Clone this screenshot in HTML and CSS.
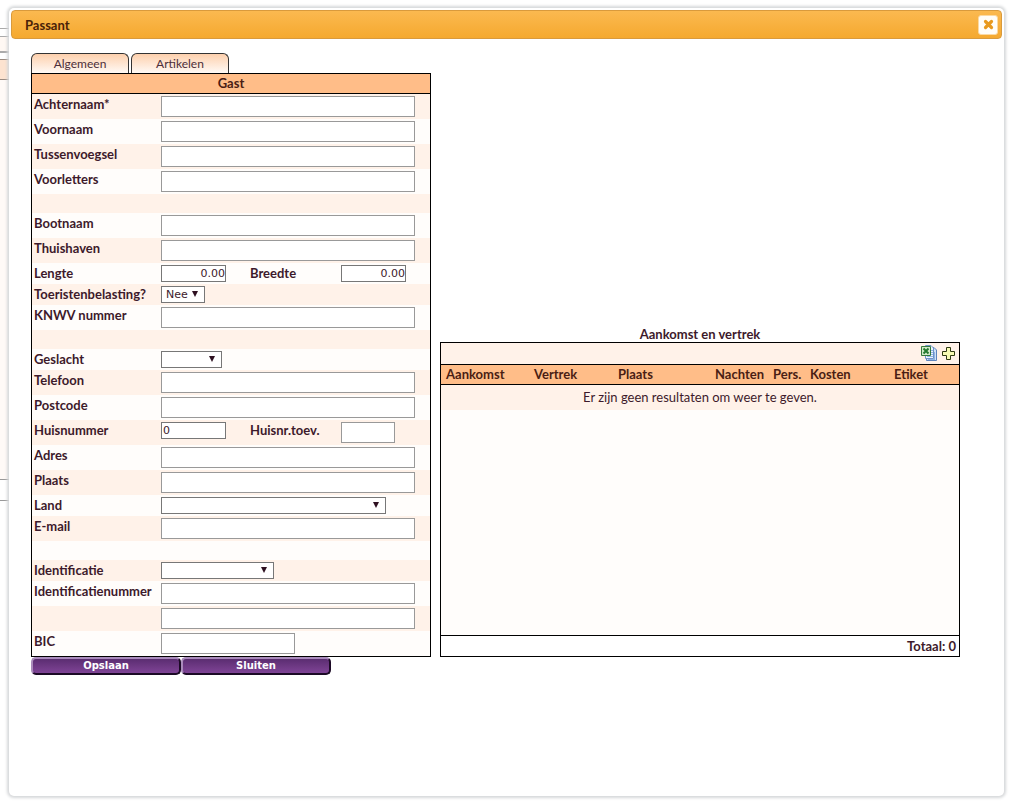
FILE: index.html
```html
<!DOCTYPE html>
<html lang="nl">
<head>
<meta charset="utf-8">
<title>Passant</title>
<link rel="stylesheet" href="styles.css">
</head>
<body>
<div class="backdrop" aria-hidden="true">
  <div class="bd-top"></div>
  <div class="bd-bar"></div>
  <div class="bd-gap"></div>
  <div class="bd-head"></div>
  <div class="bd-body"></div>
  <div class="bd-foot"></div>
</div>
<section class="dialog" role="dialog" aria-labelledby="title">
  <header class="titlebar">
    <h1 class="title" id="title">Passant</h1>
    <button class="close" type="button" aria-label="Venster sluiten">
      <svg width="11" height="11" viewBox="0 0 11 11"><path d="M2.5 2.5 8.5 8.5M8.500 2.500 2.500 8.500" stroke="#e8991d" stroke-width="3.200" stroke-linecap="round"/></svg>
    </button>
  </header>
  <form class="content">
    <nav class="tabs">
      <a class="tab" href="#algemeen">Algemeen</a>
      <a class="tab" href="#artikelen">Artikelen</a>
    </nav>
    <div class="panels">
      <div class="guest" id="algemeen">
        <h2 class="guest-head">Gast</h2>
        <div class="row"><label for="f1">Achternaam*</label><input class="wide" id="f1" type="text"></div>
        <div class="row"><label for="f2">Voornaam</label><input class="wide" id="f2" type="text"></div>
        <div class="row"><label for="f3">Tussenvoegsel</label><input class="wide" id="f3" type="text"></div>
        <div class="row"><label for="f4">Voorletters</label><input class="wide" id="f4" type="text"></div>
        <div class="row blank"></div>
        <div class="row"><label for="f5">Bootnaam</label><input class="wide" id="f5" type="text"></div>
        <div class="row"><label for="f6">Thuishaven</label><input class="wide" id="f6" type="text"></div>
        <div class="row"><label for="f7">Lengte</label><input class="num right" id="f7" type="text" value="0.00"><label for="f8">Breedte</label><input class="num right" id="f8" type="text" value="0.00"></div>
        <div class="row"><label for="f9">Toeristenbelasting?</label><span class="pick pick-xs"><select id="f9"><option>Nee</option><option>Ja</option></select></span></div>
        <div class="row"><label for="f10">KNWV nummer</label><input class="wide" id="f10" type="text"></div>
        <div class="row blank"></div>
        <div class="row"><label for="f11">Geslacht</label><span class="pick pick-s"><select id="f11"><option></option></select></span></div>
        <div class="row"><label for="f12">Telefoon</label><input class="wide" id="f12" type="text"></div>
        <div class="row"><label for="f13">Postcode</label><input class="wide" id="f13" type="text"></div>
        <div class="row"><label for="f14">Huisnummer</label><input class="num" id="f14" type="text" value="0"><label for="f15">Huisnr.toev.</label><input class="short" id="f15" type="text"></div>
        <div class="row"><label for="f16">Adres</label><input class="wide" id="f16" type="text"></div>
        <div class="row"><label for="f17">Plaats</label><input class="wide" id="f17" type="text"></div>
        <div class="row"><label for="f18">Land</label><span class="pick pick-l"><select id="f18"><option></option></select></span></div>
        <div class="row"><label for="f19">E-mail</label><input class="wide" id="f19" type="text"></div>
        <div class="row blank"></div>
        <div class="row"><label for="f20">Identificatie</label><span class="pick pick-m"><select id="f20"><option></option></select></span></div>
        <div class="row"><label for="f21">Identificatienummer</label><input class="wide" id="f21" type="text"></div>
        <div class="row"><span></span><input class="wide" type="text" aria-label="Identificatienummer vervolg"></div>
        <div class="row"><label for="f22">BIC</label><input class="medium" id="f22" type="text"></div>
      </div>
      <div class="stay">
        <h2 class="stay-title">Aankomst en vertrek</h2>
        <div class="grid-box">
          <div class="tools">
            <button class="tool" type="button" aria-label="Exporteren naar Excel">
              <svg width="16" height="16" viewBox="0 0 16 16"><path d="M7.500 2.500H13L15.500 5V15.500H5.500V11" fill="#cfe1f8" stroke="#5d83bd"/><path d="M4.500.5H10L12.500 3V13.500H4.500Z" fill="#edf4fd" stroke="#6f92c8"/><path d="M7 5.500H12M7 7.500H12M6 9.500H12M6 11.500H12M13.500 7V14M7 14.500H14" stroke="#8fb3e2"/><path d="M.5 1.500H9.500V10.500H.5Z" fill="#d3ebca" stroke="#35793c"/><path d="M2.500 3.500 7.500 8.500M7.500 3.500 2.500 8.500" stroke="#247a31" stroke-width="2"/></svg>
            </button>
            <button class="tool" type="button" aria-label="Toevoegen">
              <svg width="14" height="14" viewBox="0 0 14 14"><path d="M4.500 1.500H8.500V5.500H12.500V9.500H8.500V13.500H4.500V9.500H.5V5.500H4.500Z" fill="#f7fbb4" stroke="#2e3a12"/></svg>
            </button>
          </div>
          <table class="results">
            <colgroup><col class="c1"><col class="c2"><col class="c3"><col class="c4"><col class="c5"><col class="c6"><col class="c7"></colgroup>
            <thead><tr><th>Aankomst</th><th>Vertrek</th><th>Plaats</th><th>Nachten</th><th>Pers.</th><th>Kosten</th><th>Etiket</th></tr></thead>
            <tbody><tr><td colspan="7">Er zijn geen resultaten om weer te geven.</td></tr></tbody>
          </table>
          <div class="filler"></div>
          <div class="total">Totaal: 0</div>
        </div>
      </div>
    </div>
    <div class="actions">
      <button class="action" type="submit">Opslaan</button><button class="action" type="button">Sluiten</button>
    </div>
  </form>
</section>
</body>
</html>
```

FILE: styles.css
```css
* { box-sizing: border-box; }

html { height: 100%; }

body {
  display: flex;
  min-height: 100%;
  margin: 0;
  padding: 8px 8px 11px 9px;
  background: #fff;
  color: #3d1a2b;
  font: 13px/16px "Century Gothic", Lato, sans-serif;
}

h1, h2 { margin: 0; font-size: 13px; font-weight: 700; line-height: 16px; }

/* Page behind the dialog */
.backdrop {
  position: absolute;
  inset: 0 auto 0 0;
  width: 9px;
}
.bd-top { height: 28px; }
.bd-bar { height: 9px; border: solid #aaa; border-width: 1px 0; }
.bd-gap { height: 22px; background: linear-gradient(#fff8f3 14px, #aaa 14px 16px, #fff 16px); }
.bd-head { height: 21px; border: solid #9a8a80; border-width: 1px 0; background: #fde3d0; }
.bd-body { height: 399px; background: #fffaf7; }
.bd-foot { height: 22px; border: solid #999; border-width: 1px 0; }

.dialog {
  position: relative;
  flex: 1;
  padding: 2px;
  border-radius: 5px;
  background: #fff;
  box-shadow: 0 0 3px 2px #d6d8da;
}

.titlebar {
  display: flex;
  align-items: center;
  justify-content: space-between;
  height: 29px;
  padding: 0 3px 0 13px;
  border: 1px solid #d99a3c;
  border-radius: 4px;
  background: linear-gradient(#fbb950, #f5a92f);
}
.title { color: #4a2208; }
.close {
  display: grid;
  place-items: center;
  width: 20px;
  height: 20px;
  padding: 0;
  border: 1px solid #fbd9a2;
  border-radius: 3px;
  background: #fffdf8;
}

.content { padding: 14px 20px 0; }

.tabs { display: flex; gap: 2px; }
.tab {
  width: 98px;
  height: 20px;
  padding-top: 2px;
  border: 1px solid #333;
  border-bottom: 0;
  border-radius: 6px 6px 0 0;
  background: linear-gradient(#fdd0ad, #fffaf6);
  color: #4d2f3a;
  font-size: 12px;
  text-align: center;
  text-decoration: none;
}

.panels { display: flex; gap: 9px; }

.guest {
  flex: 0 1 400px;
  border: 1px solid #000;
}
.guest-head {
  height: 20px;
  padding-top: 1px;
  border-bottom: 1px solid #000;
  background: #ffbd88;
  color: #4a1d14;
  text-align: center;
}

.row {
  display: grid;
  grid-template-columns: 127px 89px 91px 1fr;
  align-items: start;
  padding: 2px 15px 2px 2px;
  background: #fffdfb;
}
.row:nth-child(even) { background: #fff2e9; }
.row label { font-weight: 700; white-space: nowrap; height: 16px; }
.blank { height: 19px; }

input, select {
  height: 21px;
  margin: 0;
  padding: 0 1px;
  border: 1px solid #999;
  border-radius: 0;
  background: #fff;
  color: #3d1a2b;
  font: 11px/14px "DejaVu Sans", sans-serif;
}
.wide { grid-column: 2 / -1; width: 100%; }
.num { width: 65px; height: 17px; border-color: #777; }
.right { padding-right: 0; text-align: right; }
.short { width: 54px; }
.medium { width: 134px; }

.pick {
  position: relative;
  display: block;
  grid-column: 2 / -1;
  height: 17px;
}
.pick select {
  display: block;
  width: 100%;
  height: 17px;
  padding: 0 4px;
  border-color: #777;
  appearance: none;
}
.pick::after {
  content: "";
  position: absolute;
  top: 5px;
  right: 7px;
  border: solid transparent;
  border-width: 6px 3px 0;
  border-top-color: #2e1020;
  pointer-events: none;
}
.pick-xs { width: 44px; }
.pick-s { width: 61px; }
.pick-m { width: 113px; }
.pick-l { width: 225px; }

.stay {
  display: flex;
  flex: 0 1 520px;
  flex-direction: column;
  justify-content: flex-end;
}
.stay-title { text-align: center; }
.grid-box {
  border: 1px solid #000;
  background: #fffdfb;
}
.tools {
  display: flex;
  align-items: center;
  justify-content: flex-end;
  gap: 5px;
  height: 21px;
  padding-right: 3px;
  background: #fff2e9;
}
.tool { display: flex; padding: 0; border: 0; background: none; }

.results { width: 100%; border-collapse: collapse; table-layout: fixed; }
.results th {
  height: 20px;
  padding: 0 0 0 5px;
  border: solid #000;
  border-width: 1px 0;
  background: #ffbd88;
  color: #4a1d14;
  text-align: left;
}
.results td {
  height: 26px;
  padding: 0;
  background: #fff2e9;
  text-align: center;
}
.c1 { width: 88px; }
.c2 { width: 84px; }
.c3 { width: 97px; }
.c4 { width: 58px; }
.c5 { width: 37px; }
.c6 { width: 84px; }

.filler { height: 225px; }
.total {
  height: 21px;
  padding: 2px 3px;
  border-top: 1px solid #000;
  background: #fff;
  font-weight: 700;
  text-align: right;
}

.actions { display: flex; }
.action {
  width: 150px;
  height: 18px;
  padding: 0;
  border: 2px solid;
  border-color: #a98abb #1c0a26 #1c0a26 #a98abb;
  border-radius: 5px;
  background: linear-gradient(#5b2d71, #7f4496);
  color: #fff;
  font: bold 10px/14px "DejaVu Sans", sans-serif;
}
```
